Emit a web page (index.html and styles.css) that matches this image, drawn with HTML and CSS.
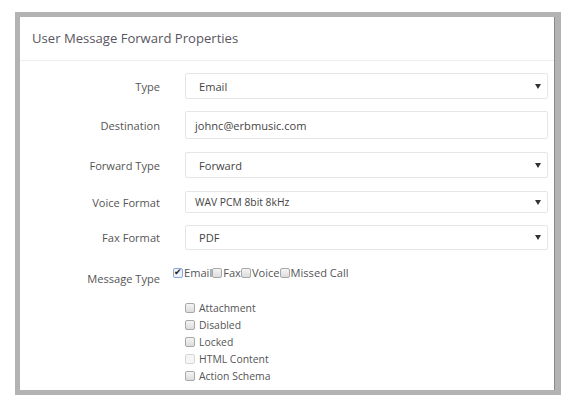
FILE: index.html
```html
<!DOCTYPE html>
<html lang="en">
<head>
  <meta charset="UTF-8" />
  <title>User Message Forward Properties</title>
  <link rel="stylesheet" href="styles.css">
</head>
<body>
  <div class="frame">
    <div class="panel">
      <div class="panel-heading">User Message Forward Properties</div>
      <div class="panel-body">
        <div class="form-row">
          <label>Type</label>
          <div class="select h26"><span>Email</span><i class="caret"></i></div>
        </div>
        <div class="form-row gap13">
          <label>Destination</label>
          <div class="input h28">johnc@erbmusic.com</div>
        </div>
        <div class="form-row gap13">
          <label>Forward Type</label>
          <div class="select h26"><span>Forward</span><i class="caret"></i></div>
        </div>
        <div class="form-row">
          <label>Voice Format</label>
          <div class="select h22 small"><span>WAV PCM 8bit 8kHz</span><i class="caret"></i></div>
        </div>
        <div class="form-row">
          <label>Fax Format</label>
          <div class="select h25"><span>PDF</span><i class="caret"></i></div>
        </div>
        <div class="form-row msg-row">
          <label>Message Type</label>
          <div class="inline-checks">
            <span class="cb checked"></span>Email<span class="cb"></span>Fax<span class="cb"></span>Voice<span class="cb"></span>Missed Call
          </div>
        </div>
        <ul class="check-list">
          <li><span class="cb"></span>Attachment</li>
          <li><span class="cb"></span>Disabled</li>
          <li><span class="cb"></span>Locked</li>
          <li class="disabled"><span class="cb"></span>HTML Content</li>
          <li><span class="cb"></span>Action Schema</li>
        </ul>
      </div>
    </div>
  </div>
</body>
</html>
```

FILE: styles.css
```css
body {
  margin: 0;
  background: white;
  font-family: "Open Sans", "Noto Sans", sans-serif;
  color: #555;
}
.frame {
  margin: 12px 14px 0 15px;
  width: 535px;
  height: 373px;
  border: 5px solid #b3b3b3;
  border-right-width: 6px;
  background: white;
  overflow: hidden;
}
.panel {
  height: 100%;
  border-right: 1px solid #8a8a8a;
  box-sizing: border-box;
}
.panel-heading {
  height: 43px;
  line-height: 43px;
  padding-left: 12px;
  font-size: 13.1px;
  color: #5a5560;
  border-bottom: 1px solid #eee;
}
.panel-body {
  padding-top: 12px;
  padding-right: 6px;
}
.form-row {
  display: grid;
  grid-template-columns: 140px 1fr;
  column-gap: 25px;
  align-items: center;
  margin-bottom: 12px;
}
.form-row.gap13 {
  margin-bottom: 13px;
}
.form-row label {
  text-align: right;
  font-size: 11.1px;
  color: #555;
}
.select, .input {
  box-sizing: border-box;
  border: 1px solid #e6e6e6;
  border-radius: 2px;
  display: flex;
  align-items: center;
  justify-content: space-between;
  padding: 0 6px 0 13px;
  font-size: 11.1px;
  color: #444;
}
.input, .small {
  padding-left: 9px;
}
.small {
  font-size: 10.3px;
}
.h26 { height: 26px; }
.h28 { height: 28px; }
.h22 { height: 22px; }
.h25 { height: 25px; }
.caret {
  width: 0;
  height: 0;
  border-left: 3px solid transparent;
  border-right: 3px solid transparent;
  border-top: 5px solid #333;
}
.msg-row {
  align-items: start;
  margin-bottom: 0;
  margin-top: 15px;
}
.msg-row label {
  padding-top: 6px;
}
.inline-checks {
  margin-left: -12px;
  font-size: 11.1px;
  color: #555;
  display: flex;
  align-items: center;
}
.cb {
  display: inline-block;
  width: 8px;
  height: 8px;
  border: 1px solid #a8a8a8;
  border-radius: 2px;
  background: linear-gradient(#f4f4f4, #dcdcdc);
  margin-right: 1px;
  position: relative;
}
.cb.checked {
  border-color: #8aa9d6;
  background: #eef3fb;
}
.cb.checked::after {
  content: "\2714";
  position: absolute;
  left: 0;
  top: -4px;
  font-size: 9px;
  color: #222;
}
.check-list {
  list-style: none;
  margin: 13px 0 0 165px;
  padding: 0;
  font-size: 10.4px;
  color: #555;
}
.check-list li {
  height: 17px;
  display: flex;
  align-items: center;
}
.check-list .cb {
  margin-right: 4px;
}
.check-list .disabled .cb {
  border-color: #d6d6d6;
  background: #f5f5f5;
}
```
